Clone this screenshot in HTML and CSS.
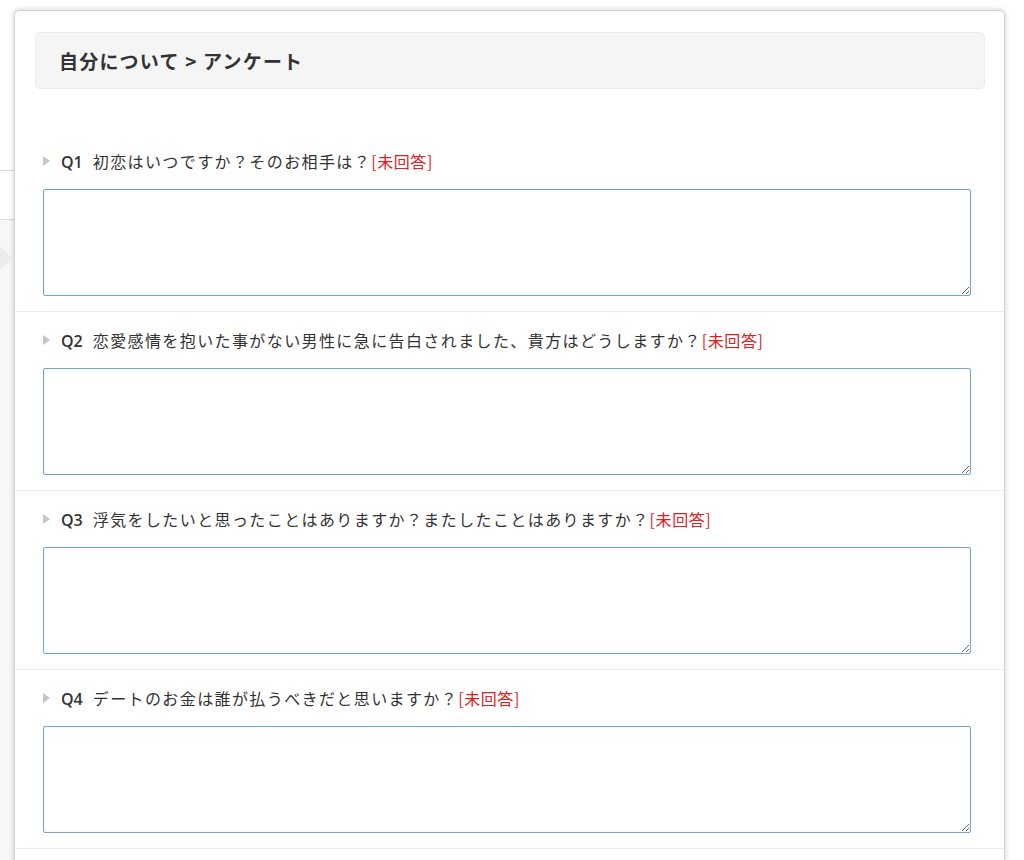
FILE: index.html
```html
<!DOCTYPE html>
<html lang="ja">
<head>
<meta charset="utf-8">
<title>アンケート</title>
<link rel="stylesheet" href="styles.css">
</head>
<body>
<div class="backdrop">
  <div class="bd-row"></div>
  <div class="bd-lower"><span class="bd-arrow"></span></div>
</div>
<div class="modal">
  <div class="modal-head">
    <h1 class="title">自分について &gt; アンケート</h1>
  </div>
  <div class="questions">
    <div class="q">
      <div class="q-label"><span class="q-arrow"></span><span class="q-num">Q1</span><span class="q-text">初恋はいつですか？そのお相手は？<span class="q-status">[未回答]</span></span></div>
      <textarea class="q-input"></textarea>
    </div>
    <div class="q">
      <div class="q-label"><span class="q-arrow"></span><span class="q-num">Q2</span><span class="q-text">恋愛感情を抱いた事がない男性に急に告白されました、貴方はどうしますか？<span class="q-status">[未回答]</span></span></div>
      <textarea class="q-input"></textarea>
    </div>
    <div class="q">
      <div class="q-label"><span class="q-arrow"></span><span class="q-num">Q3</span><span class="q-text">浮気をしたいと思ったことはありますか？またしたことはありますか？<span class="q-status">[未回答]</span></span></div>
      <textarea class="q-input"></textarea>
    </div>
    <div class="q">
      <div class="q-label"><span class="q-arrow"></span><span class="q-num">Q4</span><span class="q-text">デートのお金は誰が払うべきだと思いますか？<span class="q-status">[未回答]</span></span></div>
      <textarea class="q-input"></textarea>
    </div>
  </div>
</div>
</body>
</html>
```

FILE: styles.css
```css
html, body {
  margin: 0;
  padding: 0;
  overflow: hidden;
  background: #ffffff;
  font-family: "Noto Sans CJK JP", "Noto Sans", sans-serif;
  color: #333333;
}

.backdrop {
  position: absolute;
  left: 0;
  top: 0;
  width: 40px;
  height: 860px;
  z-index: 0;
}

.bd-row {
  margin-top: 170px;
  height: 48px;
  border-top: 1px solid #d9d9d9;
  border-bottom: 1px solid #d9d9d9;
  background: #ffffff;
}

.bd-lower {
  height: 640px;
  background: #f7f7f7;
  position: relative;
}

.bd-arrow {
  position: absolute;
  left: -6px;
  top: 20px;
  width: 0;
  height: 0;
  border-top: 18px solid transparent;
  border-bottom: 18px solid transparent;
  border-left: 18px solid #ebebeb;
}

.modal {
  position: relative;
  z-index: 1;
  margin: 10px 0 0 14px;
  width: 991px;
  box-sizing: border-box;
  background: #ffffff;
  border: 1px solid #d4d4d4;
  border-radius: 5px;
  box-shadow: 0 0 5px rgba(0, 0, 0, 0.22);
  padding: 21px 0 120px 0;
}

.modal-head {
  margin: 0 19px 0 20px;
  height: 57px;
  box-sizing: border-box;
  background: #f5f5f5;
  border: 1px solid #ececec;
  border-radius: 5px;
  display: flex;
  align-items: center;
  padding-left: 23px;
}

.title {
  margin: 0;
  font-size: 19px;
  font-weight: bold;
  letter-spacing: 1.2px;
  color: #333333;
}

.questions {
  margin-top: 44px;
}

.q {
  padding: 18px 33px 15px 28px;
  border-bottom: 1px solid #ececec;
}

.q-label {
  display: flex;
  align-items: center;
  height: 20px;
  margin-bottom: 18px;
  white-space: nowrap;
}

.q-arrow {
  width: 0;
  height: 0;
  border-top: 5px solid transparent;
  border-bottom: 5px solid transparent;
  border-left: 7px solid #c6c6c6;
  margin-right: 11px;
}

.q-num {
  font-family: "Open Sans", "Liberation Sans", Arial, sans-serif;
  font-weight: 600;
  font-size: 16px;
  line-height: 20px;
  padding-top: 2px;
  color: #333333;
  margin-right: 10px;
}

.q-text {
  font-size: 16px;
  line-height: 20px;
  letter-spacing: 1.4px;
  color: #333333;
}

.q-status {
  color: #dd2020;
  letter-spacing: 0.6px;
}

.q-input {
  display: block;
  width: 100%;
  height: 107px;
  box-sizing: border-box;
  margin: 0;
  border: 1px solid #74a9c6;
  border-radius: 2px;
  box-shadow: inset 0 0 1px rgba(116, 169, 198, 0.5);
  background: #ffffff;
  resize: vertical;
  font-family: inherit;
  font-size: 15px;
  outline: none;
}
```
